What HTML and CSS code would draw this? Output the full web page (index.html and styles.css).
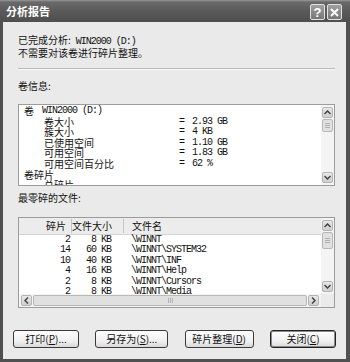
FILE: index.html
```html
<!DOCTYPE html>
<html lang="zh-CN">
<head>
    <meta charset="UTF-8">
    <title>分析报告</title>
    <link rel="stylesheet" href="styles.css">
</head>
<body>
<div class="window">
    <div class="titlebar">
        <span class="title">分析报告</span>
        <div class="title-buttons">
            <span class="tbtn">?</span>
            <span class="tbtn">
                <svg width="9" height="9" viewBox="0 0 9 9"><path d="M1 1L8 8M8 1L1 8" stroke="#fff" stroke-width="2"/></svg>
            </span>
        </div>
    </div>

    <div class="content">
        <p class="summary">已完成分析:<span class="lat drive">WIN2000 (D:)</span><br>不需要对该卷进行碎片整理。</p>
        <div class="separator"></div>

        <div class="label">卷信息:</div>
        <div class="listbox info">
            <div class="info-lines">
                <div class="row"><span>卷</span><span class="k lat first">WIN2000 (D:)</span></div>
                <div class="row"><span></span><span class="k">卷大小</span><span class="lat">=</span><span class="lat">2.93 GB</span></div>
                <div class="row"><span></span><span class="k">簇大小</span><span class="lat">=</span><span class="lat">4 KB</span></div>
                <div class="row"><span></span><span class="k">已使用空间</span><span class="lat">=</span><span class="lat">1.10 GB</span></div>
                <div class="row"><span></span><span class="k">可用空间</span><span class="lat">=</span><span class="lat">1.83 GB</span></div>
                <div class="row"><span></span><span class="k">可用空间百分比</span><span class="lat">=</span><span class="lat">62 %</span></div>
                <div class="row"><span class="wide">卷碎片</span></div>
                <div class="row"><span></span><span class="k">总碎片</span></div>
            </div>
            <div class="vscroll">
                <span class="sbtn"><svg width="7" height="5" viewBox="0 0 7 5"><path d="M0.5 4L3.5 1L6.5 4" fill="none" stroke="#444" stroke-width="1.5"/></svg></span>
                <span class="thumb"><i></i><i></i><i></i></span>
                <span class="track"></span>
                <span class="sbtn"><svg width="7" height="5" viewBox="0 0 7 5"><path d="M0.5 1L3.5 4L6.5 1" fill="none" stroke="#444" stroke-width="1.5"/></svg></span>
            </div>
        </div>

        <div class="label second">最零碎的文件:</div>
        <div class="listbox files">
            <div class="file-main">
                <div class="file-head">
                    <span class="th num">碎片</span>
                    <span class="th size">文件大小</span>
                    <span class="th name">文件名</span>
                </div>
                <div class="file-rows lat">
                    <span class="num">2</span><span class="size">8 KB</span><span class="name">\WINNT</span>
                    <span class="num">14</span><span class="size">60 KB</span><span class="name">\WINNT\SYSTEM32</span>
                    <span class="num">10</span><span class="size">40 KB</span><span class="name">\WINNT\INF</span>
                    <span class="num">4</span><span class="size">16 KB</span><span class="name">\WINNT\Help</span>
                    <span class="num">2</span><span class="size">8 KB</span><span class="name">\WINNT\Cursors</span>
                    <span class="num">2</span><span class="size">8 KB</span><span class="name">\WINNT\Media</span>
                </div>
            </div>
            <div class="vscroll">
                <span class="sbtn"><svg width="7" height="5" viewBox="0 0 7 5"><path d="M0.5 4L3.5 1L6.5 4" fill="none" stroke="#444" stroke-width="1.5"/></svg></span>
                <span class="thumb tall"><i></i><i></i><i></i></span>
                <span class="track"></span>
                <span class="sbtn"><svg width="7" height="5" viewBox="0 0 7 5"><path d="M0.5 1L3.5 4L6.5 1" fill="none" stroke="#444" stroke-width="1.5"/></svg></span>
            </div>
            <div class="hscroll">
                <span class="sbtn"><svg width="5" height="7" viewBox="0 0 5 7"><path d="M4 0.5L1 3.5L4 6.5" fill="none" stroke="#444" stroke-width="1.5"/></svg></span>
                <span class="thumb wide"><i></i><i></i><i></i></span>
                <span class="sbtn"><svg width="5" height="7" viewBox="0 0 5 7"><path d="M1 0.5L4 3.5L1 6.5" fill="none" stroke="#444" stroke-width="1.5"/></svg></span>
            </div>
            <div class="corner"></div>
        </div>

        <div class="buttons">
            <button class="btn b-print">打印(<u>P</u>)...</button>
            <button class="btn b-save">另存为(<u>S</u>)...</button>
            <button class="btn b-defrag">碎片整理(<u>D</u>)</button>
            <button class="btn b-close">关闭(<u>C</u>)</button>
        </div>
    </div>
</div>
</body>
</html>
```

FILE: styles.css
```css
body {
    margin: 0;
    background: #4e4e4e;
    font-family: "Noto Sans CJK SC", sans-serif;
    font-size: 10px;
    color: #111;
}
.window {
    width: 350px;
    height: 362px;
    display: flex;
    flex-direction: column;
    background: #505050;
}
.titlebar {
    height: 22px;
    flex: none;
    display: flex;
    align-items: center;
    justify-content: space-between;
    padding: 0 8px 0 6px;
    background: linear-gradient(#9a9a9a 0, #6a6a6a 2px, #5a5a5a 50%, #4e4e4e);
}
.title {
    color: #fff;
    font-weight: bold;
    font-size: 11px;
    line-height: 12px;
}
.title-buttons {
    display: flex;
    gap: 2px;
    margin-top: 2px;
}
.tbtn {
    width: 15px;
    height: 16px;
    box-sizing: border-box;
    border: 1px solid #e2e2e2;
    border-radius: 2px;
    background: linear-gradient(#a0a0a0, #767676);
    color: #fff;
    font: bold 13px "Liberation Sans", sans-serif;
    display: flex;
    align-items: center;
    justify-content: center;
}
.content {
    flex: 1;
    margin: 0 4px 3px 3px;
    background: #eaeaea;
    padding: 12px 11px 0 15px;
}
.summary {
    margin: 0;
    line-height: 11px;
}
.lat {
    font-family: "Liberation Mono", monospace;
    letter-spacing: -1px;
}
.drive {
    margin-left: 5px;
}
.separator {
    margin-top: 10px;
    height: 1px;
    background: #b8b8b8;
    border-bottom: 1px solid #fafafa;
}
.label {
    margin-top: 10px;
    line-height: 11px;
}
.label.second {
    margin-top: 6px;
}
.listbox {
    background: #fff;
    border: 1px solid #9c9c9c;
    box-sizing: border-box;
}
.info {
    margin-top: 13px;
    height: 82px;
    display: flex;
    overflow: hidden;
}
.info-lines {
    flex: 1;
    padding: 1px 0 0 5px;
    overflow: hidden;
}
.row {
    display: grid;
    grid-template-columns: 20px 135px 13px auto;
    line-height: 10.6px;
    white-space: nowrap;
}
.row .first {
    margin-left: -2px;
}
.row .wide {
    grid-column: 1 / 3;
}
.vscroll {
    width: 13px;
    flex: none;
    display: flex;
    flex-direction: column;
    align-items: center;
    padding: 2px 0;
    box-sizing: border-box;
    background: #f4f4f4;
}
.sbtn {
    width: 11px;
    height: 11px;
    flex: none;
    box-sizing: border-box;
    border: 1px solid #b4b4b4;
    border-radius: 2px;
    background: linear-gradient(#e8e8e8, #cfcfcf);
    display: flex;
    align-items: center;
    justify-content: center;
}
.thumb {
    width: 11px;
    height: 13px;
    margin-top: 1px;
    box-sizing: border-box;
    border: 1px solid #b8b8b8;
    border-radius: 2px;
    background: #e0e0e0;
    display: flex;
    flex-direction: column;
    align-items: center;
    justify-content: center;
    gap: 1px;
}
.thumb i {
    display: block;
    width: 5px;
    height: 1px;
    background: #b0b0b0;
}
.thumb.tall {
    height: 17px;
}
.track {
    flex: 1;
}
.files {
    margin-top: 14px;
    height: 91px;
    display: grid;
    grid-template-columns: 1fr 13px;
    grid-template-rows: 76px 13px;
    overflow: hidden;
}
.file-main {
    overflow: hidden;
}
.file-head {
    display: grid;
    grid-template-columns: 52px 52px 1fr;
    height: 17px;
    box-sizing: border-box;
    background: #ececec;
    border-bottom: 1px solid #d4d4d4;
    align-items: center;
}
.th {
    line-height: 12px;
    padding: 1px 0;
}
.th + .th {
    border-left: 1px solid #c4c4c4;
}
.th.num {
    text-align: right;
    padding-right: 5px;
}
.th.size {
    text-align: right;
    padding-right: 11px;
}
.th.name {
    padding-left: 8px;
}
.file-rows {
    display: grid;
    grid-template-columns: 52px 52px 1fr;
    line-height: 10.4px;
    white-space: nowrap;
}
.file-rows .num {
    text-align: right;
    padding-right: 1px;
}
.file-rows .size {
    text-align: right;
    padding-right: 12px;
}
.file-rows .name {
    padding-left: 8px;
}
.files .vscroll {
    height: 76px;
}
.hscroll {
    display: flex;
    align-items: center;
    padding: 0 2px;
    gap: 1px;
    background: #f4f4f4;
}
.thumb.wide {
    flex: 1;
    height: 11px;
    margin: 0;
    flex-direction: row;
}
.thumb.wide i {
    width: 1px;
    height: 5px;
}
.corner {
    background: #eaeaea;
}
.buttons {
    margin: 22px -1px 0 -5px;
    display: flex;
    justify-content: space-between;
}
.btn {
    height: 18px;
    padding: 0;
    box-sizing: border-box;
    border: 1px solid #3a3a3a;
    border-radius: 3px;
    background: linear-gradient(#fefefe, #efefef 65%, #d9d9d9);
    font-family: "Noto Sans CJK SC", sans-serif;
    font-size: 10px;
    line-height: 14px;
    color: #111;
}
.btn u {
    text-underline-offset: 1px;
}
.b-print { width: 66px; }
.b-save { width: 73px; }
.b-defrag { width: 69px; }
.b-close {
    width: 66px;
    border-color: #222;
    box-shadow: inset 0 0 0 1px #8a8a8a;
}
```
